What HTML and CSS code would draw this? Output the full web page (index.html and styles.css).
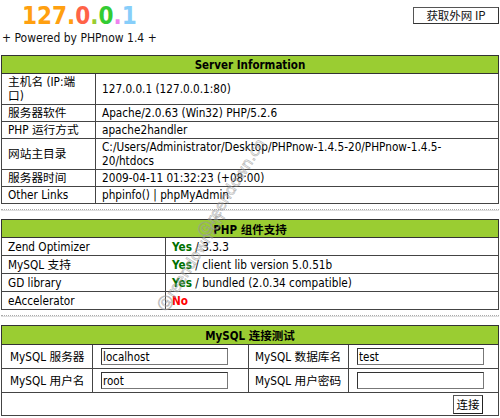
FILE: index.html
```html
<!DOCTYPE html>
<html>
<head>
<meta charset="utf-8">
<title>PHPnow</title>
<link rel="stylesheet" href="styles.css">
</head>
<body>
<div class="page">
  <div class="top">
    <div class="brand">
      <div class="logo"><span class="c1">127.</span><span class="c2">0</span><span class="c3">.</span><span class="c4">0</span><span class="c5">.</span><span class="c6">1</span></div>
      <div class="powered">+ Powered by PHPnow 1.4 +</div>
    </div>
    <button class="btn-ip">获取外网 IP</button>
  </div>

  <table class="info t1">
    <colgroup><col class="w94"><col></colgroup>
    <tr><th colspan="2">Server Information</th></tr>
    <tr><td>主机名 (IP:端口)</td><td>127.0.0.1 (127.0.0.1:80)</td></tr>
    <tr><td>服务器软件</td><td>Apache/2.0.63 (Win32) PHP/5.2.6</td></tr>
    <tr><td>PHP 运行方式</td><td>apache2handler</td></tr>
    <tr><td>网站主目录</td><td>C:/Users/Administrator/Desktop/PHPnow-1.4.5-20/PHPnow-1.4.5-20/htdocs</td></tr>
    <tr><td>服务器时间</td><td>2009-04-11 01:32:23 (+08:00)</td></tr>
    <tr><td>Other Links</td><td>phpinfo() | phpMyAdmin</td></tr>
  </table>

  <div class="sep"></div>

  <table class="info t2">
    <colgroup><col class="w164"><col></colgroup>
    <tr><th colspan="2">PHP 组件支持</th></tr>
    <tr><td>Zend Optimizer</td><td><b class="yes">Yes</b> / 3.3.3</td></tr>
    <tr><td>MySQL 支持</td><td><b class="yes">Yes</b> / client lib version 5.0.51b</td></tr>
    <tr><td>GD library</td><td><b class="yes">Yes</b> / bundled (2.0.34 compatible)</td></tr>
    <tr><td>eAccelerator</td><td><b class="no">No</b></td></tr>
  </table>

  <div class="sep"></div>

  <table class="info t3">
    <colgroup><col class="w91"><col class="w156"><col class="w100"><col></colgroup>
    <tr><th colspan="4">MySQL 连接测试</th></tr>
    <tr>
      <td class="k3">MySQL 服务器</td><td class="f"><input class="in" type="text" value="localhost"></td>
      <td class="k4">MySQL 数据库名</td><td class="f"><input class="in" type="text" value="test"></td>
    </tr>
    <tr>
      <td class="k3">MySQL 用户名</td><td class="f"><input class="in" type="text" value="root"></td>
      <td class="k4">MySQL 用户密码</td><td class="f"><input class="in" type="password" value=""></td>
    </tr>
    <tr><td colspan="4" class="act"><button class="btn-go">连接</button></td></tr>
  </table>
</div>
<div class="wm wm-a">Ⓖreendown.cn</div>
<div class="wm wm-b">Ⓖreendown.cn</div>
</body>
</html>
```

FILE: styles.css
```css
* { box-sizing: border-box; }
html, body { margin: 0; padding: 0; background: #fff; }
body {
  font-family: "DejaVu Sans Condensed", "DejaVu Sans", "Noto Sans CJK SC", sans-serif;
  font-size: 11.7px;
  color: #000;
  position: relative;
}
.page { width: 500px; padding: 0 1px; }

.top { display: flex; justify-content: space-between; align-items: flex-start; height: 55px; }
.brand { padding-top: 4px; }
.logo {
  font-family: "DejaVu Sans Condensed", "DejaVu Sans", sans-serif;
  font-weight: bold;
  font-size: 24px;
  line-height: 24px;
  padding-left: 21px;
}
.c1 { color: #ffa010; }
.c2 { color: #ff6347; }
.c3 { color: #9acd32; }
.c4 { color: #33cc33; }
.c5 { color: #ee82ee; }
.c6 { color: #87cefa; }
.powered { font-size: 12px; line-height: 14px; margin-top: 3px; padding-left: 1px; color: #111; }

.btn-ip {
  margin-top: 7px;
  width: 86px;
  height: 17px;
  padding: 0;
  background: #fff;
  border: 1px solid #555;
  border-right-color: #333;
  border-bottom-color: #333;
  font-family: "Noto Sans CJK SC", "DejaVu Sans Condensed", sans-serif;
  font-size: 11.5px;
  line-height: 15px;
  color: #111;
}

.info {
  width: 498px;
  border-collapse: collapse;
  border: 1px solid #333;
  table-layout: fixed;
}
.w94 { width: 94px; }
.w164 { width: 164px; }
.w91 { width: 91px; }
.w156 { width: 156px; }
.w100 { width: 100px; }

.info th {
  background: #9acd32;
  font-weight: bold;
  text-align: center;
  height: 18px;
  padding: 0;
  border: 1px solid #333;
  font-size: 11.5px;
}
.info td {
  border: 1px solid #444;
  padding: 1px 6px;
  line-height: 14px;
  height: 17px;
  vertical-align: middle;
}
.t2 td { height: 18px; }
.yes { color: #007000; }
.no { color: #ff0000; }

.sep {
  height: 2px;
  margin: 5px 0 8px;
  border-top: 1px dotted #aaa;
  border-bottom: 1px solid #ddd;
}

.t3 th { height: 19px; }
.t3 td { height: 24px; }
.t3 td.k3 { padding-left: 8px; }
.t3 td.f { padding: 0 8px; }
.t3 td.k4 { padding-left: 6px; }
.t3 td.act { text-align: right; height: 23px; padding: 0 15px 0 0; }
.in {
  width: 127px;
  height: 17px;
  padding: 0 1px;
  border: 1px solid #333;
  border-right-color: #777;
  border-bottom-color: #777;
  font-family: "DejaVu Sans Condensed", "DejaVu Sans", sans-serif;
  font-size: 11.5px;
  display: block;
}
.btn-go {
  height: 19px;
  width: 30px;
  padding: 0;
  background: #fff;
  border: 1px solid #555;
  border-right-color: #222;
  border-bottom-color: #222;
  font-family: "Noto Sans CJK SC", sans-serif;
  font-size: 11.5px;
  line-height: 15px;
  vertical-align: middle;
}

.wm {
  position: absolute;
  font-family: "DejaVu Sans", sans-serif;
  font-size: 15px;
  line-height: 15px;
  white-space: nowrap;
  color: rgba(255, 255, 255, 0.2);
  -webkit-text-stroke: 0.7px rgba(140, 140, 140, 0.6);
  transform: translate(-50%, -50%) rotate(-58deg);
  pointer-events: none;
}
.wm-a { left: 232px; top: 188px; }
.wm-b { left: 192px; top: 262px; }
```
